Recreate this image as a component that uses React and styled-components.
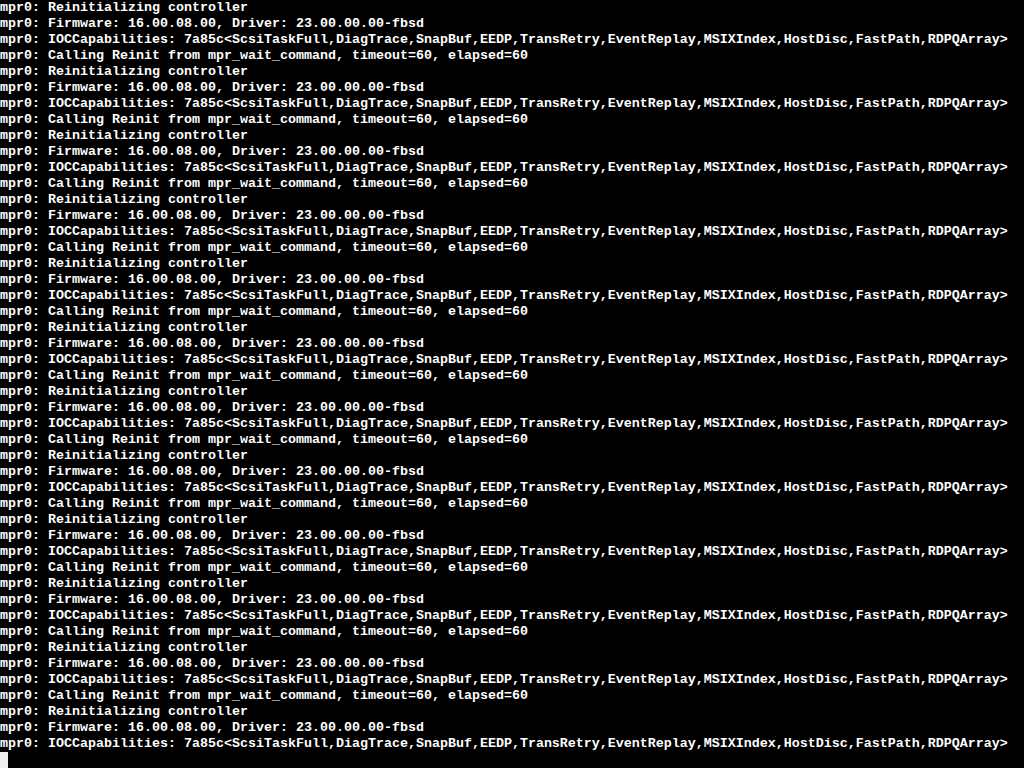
import React from "react";
import styled, { createGlobalStyle } from "styled-components";

const GlobalStyle = createGlobalStyle`
  html, body {
    margin: 0;
    padding: 0;
    background: #000;
  }
`;

const block = [
  "mpr0: Reinitializing controller",
  "mpr0: Firmware: 16.00.08.00, Driver: 23.00.00.00-fbsd",
  "mpr0: IOCCapabilities: 7a85c<ScsiTaskFull,DiagTrace,SnapBuf,EEDP,TransRetry,EventReplay,MSIXIndex,HostDisc,FastPath,RDPQArray>",
  "mpr0: Calling Reinit from mpr_wait_command, timeout=60, elapsed=60",
];

const lines = Array.from({ length: 47 }, (_, i) => block[i % 4]);

function App() {
  return (
    <>
      <GlobalStyle />
      <Screen>
        {lines.map((text, i) => (
          <Line key={i}>{text}</Line>
        ))}
        <Line>
          <Cursor />
        </Line>
      </Screen>
    </>
  );
}

const Screen = styled.div`
  width: 1024px;
  height: 768px;
  overflow: hidden;
  background: #000;
  color: #fff;
  font-family: "Liberation Mono", "DejaVu Sans Mono", monospace;
  font-size: 13.3333px;
  font-weight: bold;
`;

const Line = styled.div`
  height: 16px;
  line-height: 16px;
  white-space: pre;
`;

const Cursor = styled.span`
  display: inline-block;
  width: 8px;
  height: 16px;
  background: #eee;
  vertical-align: top;
`;

export default App;
